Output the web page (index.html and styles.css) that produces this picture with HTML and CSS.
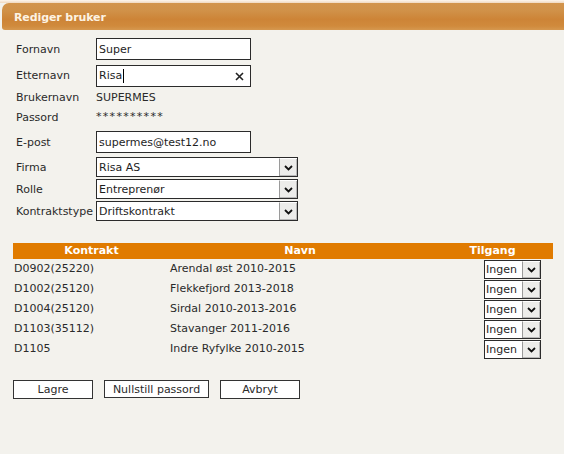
FILE: index.html
```html
<!DOCTYPE html>
<html lang="no">
<head>
<meta charset="utf-8">
<title>Rediger bruker</title>
<link rel="stylesheet" href="styles.css">
</head>
<body>
<div class="page">
  <div class="topline"></div>
  <div class="titlebar">Rediger bruker</div>

  <div class="form">
    <div class="row r-input">
      <span class="label">Fornavn</span>
      <div class="input">Super</div>
    </div>
    <div class="row r-input r2">
      <span class="label">Etternavn</span>
      <div class="input"><span>Risa</span><span class="caret"></span>
        <svg class="clear" width="9" height="9" viewBox="0 0 9 9"><path d="M1 1L8 8M8 1L1 8" stroke="#222" stroke-width="1.6"/></svg>
      </div>
    </div>
    <div class="row r-text">
      <span class="label">Brukernavn</span>
      <span class="value">SUPERMES</span>
    </div>
    <div class="row r-text">
      <span class="label">Passord</span>
      <span class="value stars">**********</span>
    </div>
    <div class="row r-input r5">
      <span class="label">E-post</span>
      <div class="input">supermes@test12.no</div>
    </div>
    <div class="row r-select r6">
      <span class="label">Firma</span>
      <div class="select wide"><span class="sel-text">Risa AS</span><span class="arrow"><svg width="9" height="6" viewBox="0 0 9 6"><path d="M1 1L4.5 4.5L8 1" fill="none" stroke="#111" stroke-width="1.8"/></svg></span></div>
    </div>
    <div class="row r-select">
      <span class="label">Rolle</span>
      <div class="select wide"><span class="sel-text">Entreprenør</span><span class="arrow"><svg width="9" height="6" viewBox="0 0 9 6"><path d="M1 1L4.5 4.5L8 1" fill="none" stroke="#111" stroke-width="1.8"/></svg></span></div>
    </div>
    <div class="row r-select">
      <span class="label">Kontraktstype</span>
      <div class="select wide"><span class="sel-text">Driftskontrakt</span><span class="arrow"><svg width="9" height="6" viewBox="0 0 9 6"><path d="M1 1L4.5 4.5L8 1" fill="none" stroke="#111" stroke-width="1.8"/></svg></span></div>
    </div>
  </div>

  <div class="table">
    <div class="thead">
      <span class="c1">Kontrakt</span>
      <span class="c2">Navn</span>
      <span class="c3">Tilgang</span>
    </div>
    <div class="trow">
      <span class="c1">D0902(25220)</span>
      <span class="c2">Arendal øst 2010-2015</span>
      <span class="c3"><span class="select small"><span class="sel-text">Ingen</span><span class="arrow"><svg width="9" height="6" viewBox="0 0 9 6"><path d="M1 1L4.5 4.5L8 1" fill="none" stroke="#111" stroke-width="1.8"/></svg></span></span></span>
    </div>
    <div class="trow">
      <span class="c1">D1002(25120)</span>
      <span class="c2">Flekkefjord 2013-2018</span>
      <span class="c3"><span class="select small"><span class="sel-text">Ingen</span><span class="arrow"><svg width="9" height="6" viewBox="0 0 9 6"><path d="M1 1L4.5 4.5L8 1" fill="none" stroke="#111" stroke-width="1.8"/></svg></span></span></span>
    </div>
    <div class="trow">
      <span class="c1">D1004(25120)</span>
      <span class="c2">Sirdal 2010-2013-2016</span>
      <span class="c3"><span class="select small"><span class="sel-text">Ingen</span><span class="arrow"><svg width="9" height="6" viewBox="0 0 9 6"><path d="M1 1L4.5 4.5L8 1" fill="none" stroke="#111" stroke-width="1.8"/></svg></span></span></span>
    </div>
    <div class="trow">
      <span class="c1">D1103(35112)</span>
      <span class="c2">Stavanger 2011-2016</span>
      <span class="c3"><span class="select small"><span class="sel-text">Ingen</span><span class="arrow"><svg width="9" height="6" viewBox="0 0 9 6"><path d="M1 1L4.5 4.5L8 1" fill="none" stroke="#111" stroke-width="1.8"/></svg></span></span></span>
    </div>
    <div class="trow">
      <span class="c1">D1105</span>
      <span class="c2">Indre Ryfylke 2010-2015</span>
      <span class="c3"><span class="select small"><span class="sel-text">Ingen</span><span class="arrow"><svg width="9" height="6" viewBox="0 0 9 6"><path d="M1 1L4.5 4.5L8 1" fill="none" stroke="#111" stroke-width="1.8"/></svg></span></span></span>
    </div>
  </div>

  <div class="buttons">
    <button class="btn b-lagre">Lagre</button>
    <button class="btn b-null">Nullstill passord</button>
    <button class="btn b-avbryt">Avbryt</button>
  </div>
</div>
</body>
</html>
```
FILE: styles.css
```css
html, body {
  margin: 0;
  padding: 0;
  background: #f3f2ed;
}
body {
  font-family: "DejaVu Sans", Verdana, sans-serif;
  font-size: 11px;
  color: #2a2a2a;
}
.page {
  width: 564px;
  height: 454px;
  background: #f3f2ed;
  overflow: hidden;
}
.topline {
  height: 3px;
  background: linear-gradient(#fdf6ee, #f0d9c0);
}
.titlebar {
  height: 27px;
  margin-left: 2px;
  border-top-left-radius: 7px;
  border-bottom-left-radius: 3px;
  background: linear-gradient(#d2944c 0%, #d09148 30%, #cd8437 60%, #d08a3c 85%, #d6984f 100%);
  color: #fdf3e3;
  font-weight: bold;
  font-size: 11px;
  line-height: 29px;
  padding-left: 12px;
  letter-spacing: -0.1px;
}
.form {
  padding: 8px 0 0 16px;
}
.row {
  display: flex;
  align-items: center;
}
.label {
  width: 80px;
  flex: none;
  color: #2a2a2a;
}
.r-input { height: 22px; }
.r2 { margin-top: 4px; height: 23px; }
.r-text { height: 20px; }
.r5 { margin-top: 4px; }
.r-select { height: 20px; margin-top: 2px; }
.r6 { margin-top: 4px; }
.input {
  box-sizing: border-box;
  width: 155px;
  height: 22px;
  border: 1px solid #2b2b2b;
  background: #fff;
  display: flex;
  align-items: center;
  padding-left: 2px;
  color: #1e1e1e;
  position: relative;
}
.caret {
  width: 1px;
  height: 14px;
  background: #000;
  margin-left: 1px;
}
.clear {
  position: absolute;
  right: 6px;
  top: 6px;
}
.value {
  color: #2a2a2a;
}
.stars {
  letter-spacing: 1.3px;
  margin-top: -2px;
}
.select {
  box-sizing: border-box;
  display: flex;
  align-items: stretch;
  border: 1px solid #2b2b2b;
  background: #fff;
  color: #1e1e1e;
}
.select.wide {
  width: 202px;
  height: 20px;
}
.sel-text {
  flex: 1;
  padding-left: 2px;
  display: flex;
  align-items: center;
}
.arrow {
  width: 17px;
  flex: none;
  background: #ececea;
  border-left: 1px solid #9a9a9a;
  border-top: 1px solid #fff;
  box-shadow: inset -1px -1px 0 #b8b8b8;
  display: flex;
  align-items: center;
  justify-content: center;
}
.select.small {
  width: 57px;
  height: 19px;
}
.select.small .sel-text {
  padding-left: 1px;
}
.table {
  margin: 22px 11px 0 13px;
}
.thead {
  display: flex;
  height: 16px;
  background: #e07b00;
  color: #fff;
  font-weight: bold;
  line-height: 16px;
}
.thead span { text-align: center; }
.c1 { width: 157px; flex: none; }
.c2 { width: 260px; flex: none; }
.c3 { flex: 1; display: flex; justify-content: flex-end; padding-right: 12px; }
.thead .c3 { justify-content: center; padding-right: 0; padding-left: 2px; }
.trow {
  display: flex;
  align-items: center;
  height: 20px;
}
.trow .c1, .trow .c2 { padding-bottom: 2px; }
.trow .c1 { padding-left: 1px; box-sizing: border-box; }
.buttons {
  display: flex;
  gap: 11px;
  margin: 21px 0 0 13px;
}
.btn {
  box-sizing: border-box;
  height: 19px;
  border: 1px solid #333;
  background: #fff;
  font-family: "DejaVu Sans", Verdana, sans-serif;
  font-size: 11px;
  color: #2a2a2a;
  padding: 0;
  margin: 0;
}
.b-lagre, .b-avbryt { width: 80px; }
.b-null { width: 105px; height: 18px; }
```
